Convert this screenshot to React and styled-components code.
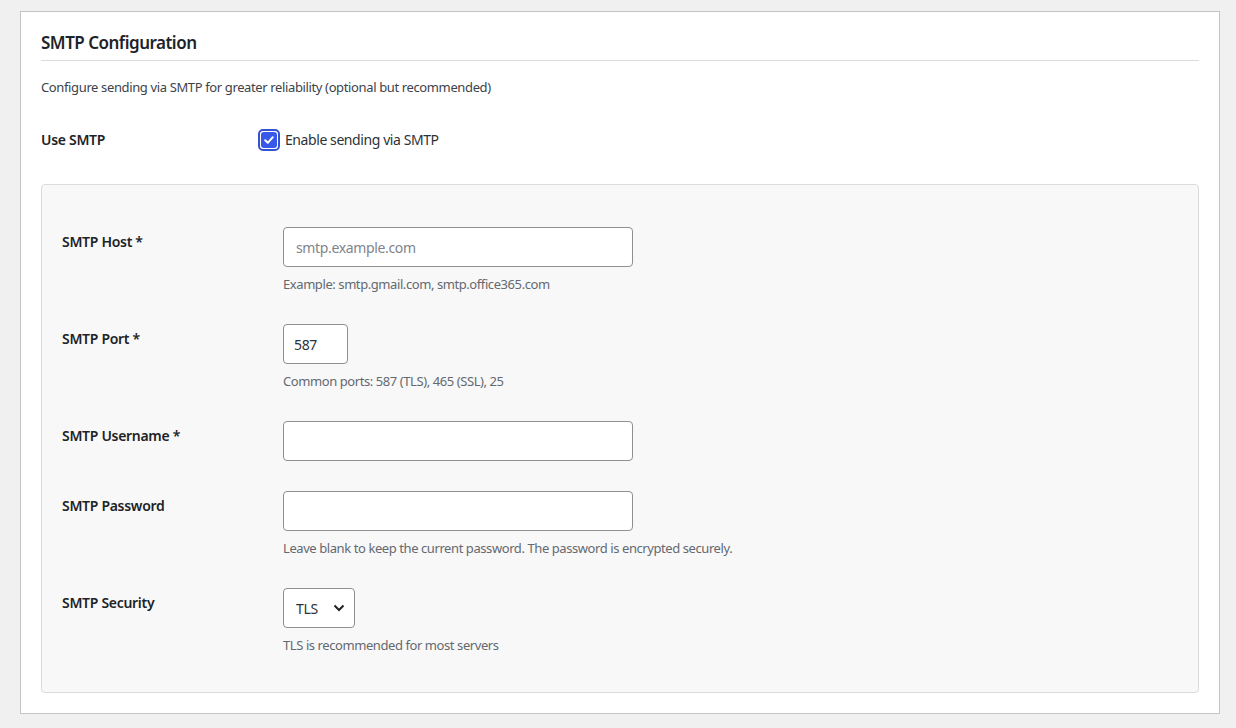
import React from "react";
import styled, { createGlobalStyle } from "styled-components";

const Global = createGlobalStyle`
  html, body { margin: 0; padding: 0; background: #f0f0f1; }
  body {
    font-family: "Noto Sans", "Open Sans", "Liberation Sans", sans-serif;
    color: #1d2327;
    font-size: 13px;
    -webkit-font-smoothing: antialiased;
  }
  * { box-sizing: border-box; }
`;

const Page = styled.div`
  padding: 11px 16px 14px 20px;
`;

const Card = styled.section`
  background: #fff;
  border: 1px solid #c3c4c7;
  padding: 20px;
`;

const Title = styled.h2`
  margin: 0;
  font-size: 17px;
  line-height: 22px;
  font-weight: 600;
  color: #1d2327;
  padding-bottom: 6px;
  border-bottom: 1px solid #dcdcde;
  letter-spacing: -0.5px;
`;

const Intro = styled.p`
  margin: 17px 0 0;
  font-size: 13px;
  line-height: 19px;
  color: #3c434a;
  letter-spacing: -0.37px;
`;

const ToggleRow = styled.div`
  display: grid;
  grid-template-columns: 217px 1fr;
  align-items: center;
  margin-top: 32px;
  height: 22px;
`;

const RowLabel = styled.div`
  font-size: 14px;
  font-weight: 600;
  line-height: 18px;
  color: #1d2327;
  letter-spacing: -0.3px;
  padding-top: ${(p) => p.$offset || 0}px;
`;

const CheckLabel = styled.label`
  display: flex;
  align-items: center;
  gap: 5px;
  font-size: 14px;
  line-height: 18px;
  color: #2c3338;
  letter-spacing: -0.42px;
  cursor: pointer;
`;

const CheckRing = styled.span`
  width: 22px;
  height: 22px;
  border: 2px solid #3451d1;
  border-radius: 5px;
  padding: 1px;
  display: inline-flex;
  background: #fff;
`;

const CheckBox = styled.span`
  flex: 1;
  background: #3858e9;
  border-radius: 3px;
  display: flex;
  align-items: center;
  justify-content: center;
`;

const Panel = styled.div`
  margin-top: 33px;
  background: #f8f8f8;
  border: 1px solid #dcdcde;
  border-radius: 4px;
  padding: 27px 20px 22px 20px;
`;

const FieldRow = styled.div`
  display: grid;
  grid-template-columns: 221px 1fr;
  padding: 15px 0;
`;

const FieldBody = styled.div`
  display: flex;
  flex-direction: column;
  align-items: flex-start;
`;

const TextInput = styled.input`
  width: ${(p) => p.$width}px;
  height: 40px;
  border: 1px solid #8c8f94;
  border-radius: 4px;
  background: #fff;
  padding: 0 ${(p) => p.$pad || 12}px;
  font-family: inherit;
  font-size: 14px;
  color: #2c3338;
  letter-spacing: -0.35px;
  outline: none;
  &::placeholder { color: #80858b; }
`;

const SelectWrap = styled.div`
  position: relative;
  width: 72px;
  height: 40px;
`;

const Select = styled.select`
  appearance: none;
  -webkit-appearance: none;
  width: 100%;
  height: 100%;
  border: 1px solid #8c8f94;
  border-radius: 4px;
  background: #fff;
  padding: 0 24px 0 12px;
  font-family: inherit;
  font-size: 14px;
  color: #2c3338;
  letter-spacing: -0.35px;
  outline: none;
`;

const Chevron = styled.svg`
  position: absolute;
  right: 10px;
  top: 15px;
  pointer-events: none;
`;

const Hint = styled.p`
  margin: 8px 0 0;
  font-size: 13px;
  line-height: 19px;
  color: #646970;
  letter-spacing: -0.42px;
`;

const fields = [
  { label: "SMTP Host *", type: "text", width: 350, placeholder: "smtp.example.com", hint: "Example: smtp.gmail.com, smtp.office365.com" },
  { label: "SMTP Port *", type: "text", width: 65, pad: 10, value: "587", hint: "Common ports: 587 (TLS), 465 (SSL), 25" },
  { label: "SMTP Username *", type: "text", width: 350 },
  { label: "SMTP Password", type: "password", width: 350, hint: "Leave blank to keep the current password. The password is encrypted securely." },
];

export default function App() {
  return (
    <>
      <Global />
      <Page>
        <Card>
          <Title>SMTP Configuration</Title>
          <Intro>Configure sending via SMTP for greater reliability (optional but recommended)</Intro>
          <ToggleRow>
            <RowLabel>Use SMTP</RowLabel>
            <CheckLabel>
              <CheckRing>
                <CheckBox>
                  <svg width="12" height="12" viewBox="0 0 12 12">
                    <path d="M2.2 6.2 L4.8 8.8 L9.8 3.2" fill="none" stroke="#fff" strokeWidth="2" strokeLinecap="round" strokeLinejoin="round" />
                  </svg>
                </CheckBox>
              </CheckRing>
              Enable sending via SMTP
            </CheckLabel>
          </ToggleRow>
          <Panel>
            {fields.map((f) => (
              <FieldRow key={f.label}>
                <RowLabel $offset={6}>{f.label}</RowLabel>
                <FieldBody>
                  <TextInput
                    type={f.type}
                    $width={f.width}
                    $pad={f.pad}
                    placeholder={f.placeholder}
                    defaultValue={f.value}
                  />
                  {f.hint && <Hint>{f.hint}</Hint>}
                </FieldBody>
              </FieldRow>
            ))}
            <FieldRow>
              <RowLabel $offset={6}>SMTP Security</RowLabel>
              <FieldBody>
                <SelectWrap>
                  <Select defaultValue="tls">
                    <option value="tls">TLS</option>
                    <option value="ssl">SSL</option>
                    <option value="none">None</option>
                  </Select>
                  <Chevron width="12" height="10" viewBox="0 0 12 10">
                    <path d="M1.5 2.5 L6 7 L10.5 2.5" fill="none" stroke="#1d2327" strokeWidth="2" />
                  </Chevron>
                </SelectWrap>
                <Hint>TLS is recommended for most servers</Hint>
              </FieldBody>
            </FieldRow>
          </Panel>
        </Card>
      </Page>
    </>
  );
}
